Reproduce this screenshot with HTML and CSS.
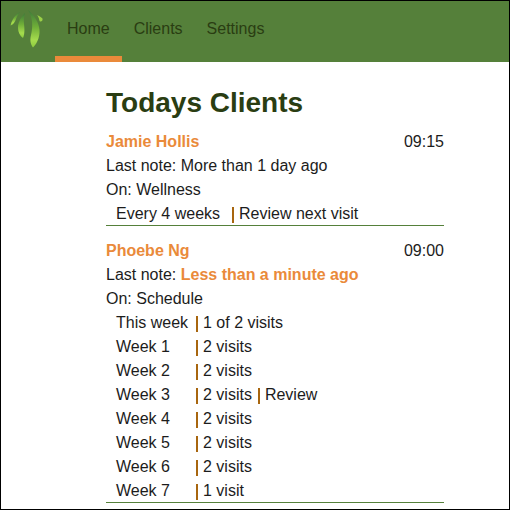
FILE: index.html
```html
<!DOCTYPE html>
<html lang="en">
<head>
    <meta charset="UTF-8" />
    <title>Todays Clients</title>
    <link rel="stylesheet" href="styles.css">
</head>
<body>
    <div class="page">
        <header class="navbar">
            <svg class="logo" width="46" height="60" viewBox="1 1 46 60" aria-hidden="true">
                <defs>
                    <linearGradient id="leaf" x1="0" y1="0" x2="0" y2="1">
                        <stop offset="0" stop-color="#3d7a3a" />
                        <stop offset="0.45" stop-color="#6fae38" />
                        <stop offset="0.8" stop-color="#a6dc4e" />
                        <stop offset="1" stop-color="#8ccb3e" />
                    </linearGradient>
                </defs>
                <path d="M28 10 C34 15 39 22 39.5 30 C40 38 36 45 33 47.5 C31 45 29.5 41 31 35 C33 27 33 18 28 10 Z" fill="url(#leaf)" />
                <path d="M25 13 C21 17 18 22 18 28 C18 32 20 36 23 38 C25 34 24.5 28 24 24 C23.5 20 24 16 25 13 Z" fill="url(#leaf)" />
                <path d="M20 12 C16 14 12 19 10.5 25.5 C13 25 15 22 16 19 C17 16 18.5 14 20 12 Z" fill="url(#leaf)" />
                <path d="M37 15 C39 16 41 17 42.5 18.5 C43 20.5 41.5 22 40 21.5 C39 20.5 39.5 18 37 15 Z" fill="#9bd048" />
            </svg>
            <nav class="nav-links">
                <a class="nav-link active" href="#">Home</a>
                <a class="nav-link" href="#">Clients</a>
                <a class="nav-link" href="#">Settings</a>
            </nav>
        </header>

        <main class="main-content">
            <h1 class="section-title">Todays Clients</h1>

            <section class="client">
                <div class="client-head">
                    <span class="client-name">Jamie Hollis</span>
                    <span>09:15</span>
                </div>
                <p class="line">Last note: More than 1 day ago</p>
                <p class="line">On: Wellness</p>
                <div class="schedule">
                    <div class="row">
                        <span class="period">Every 4 weeks</span>
                        <span class="cell">Review next visit</span>
                    </div>
                </div>
            </section>

            <section class="client">
                <div class="client-head">
                    <span class="client-name">Phoebe Ng</span>
                    <span>09:00</span>
                </div>
                <p class="line">Last note: <strong class="recent">Less than a minute ago</strong></p>
                <p class="line">On: Schedule</p>
                <div class="schedule schedule-weeks">
                    <div class="row"><span class="period">This week</span><span class="cell">1 of 2 visits</span></div>
                    <div class="row"><span class="period">Week 1</span><span class="cell">2 visits</span></div>
                    <div class="row"><span class="period">Week 2</span><span class="cell">2 visits</span></div>
                    <div class="row"><span class="period">Week 3</span><span class="cell">2 visits</span><span class="cell">Review</span></div>
                    <div class="row"><span class="period">Week 4</span><span class="cell">2 visits</span></div>
                    <div class="row"><span class="period">Week 5</span><span class="cell">2 visits</span></div>
                    <div class="row"><span class="period">Week 6</span><span class="cell">2 visits</span></div>
                    <div class="row"><span class="period">Week 7</span><span class="cell">1 visit</span></div>
                </div>
            </section>
        </main>
    </div>
</body>
</html>
```

FILE: styles.css
```css
:root {
    --green: #55803a;
    --dark-green: #2a3d12;
    --orange: #ea8a3a;
    --divider: #a8660f;
    --text-color: #1c1c1c;
}
html, body {
    margin: 0;
    padding: 0;
}
body {
    font-family: "Liberation Sans", Arial, sans-serif;
    font-size: 16px;
    line-height: 24px;
    color: var(--text-color);
    background: #fff;
}
.page {
    box-sizing: border-box;
    width: 510px;
    height: 510px;
    overflow: hidden;
    border: 1px solid #000;
}
.navbar {
    display: flex;
    height: 61px;
    background: var(--green);
}
.logo {
    flex: none;
}
.nav-links {
    display: flex;
    margin-left: 8px;
}
.nav-link {
    box-sizing: border-box;
    height: 61px;
    padding: 16px 12px 0;
    color: var(--dark-green);
    text-decoration: none;
}
.nav-link.active {
    border-bottom: 6px solid var(--orange);
}
.main-content {
    padding: 0 65px 0 105px;
}
.section-title {
    margin: 0;
    padding: 25px 0 11px;
    font-size: 28px;
    line-height: 32px;
    color: var(--dark-green);
}
.client {
    margin-bottom: 13px;
}
.client-head {
    display: flex;
    justify-content: space-between;
}
.client-name {
    font-weight: 700;
    color: var(--orange);
}
.recent {
    color: var(--orange);
}
.line {
    margin: 0;
}
.row {
    display: flex;
    padding-left: 10px;
}
.row:last-child {
    height: 23px;
    border-bottom: 1px solid var(--green);
}
.period {
    padding-right: 12px;
}
.schedule-weeks .period {
    width: 80px;
    padding-right: 0;
}
.cell {
    padding: 0 6px 0 7px;
    background: linear-gradient(var(--divider), var(--divider)) left 5px / 2px 16px no-repeat;
}
```
